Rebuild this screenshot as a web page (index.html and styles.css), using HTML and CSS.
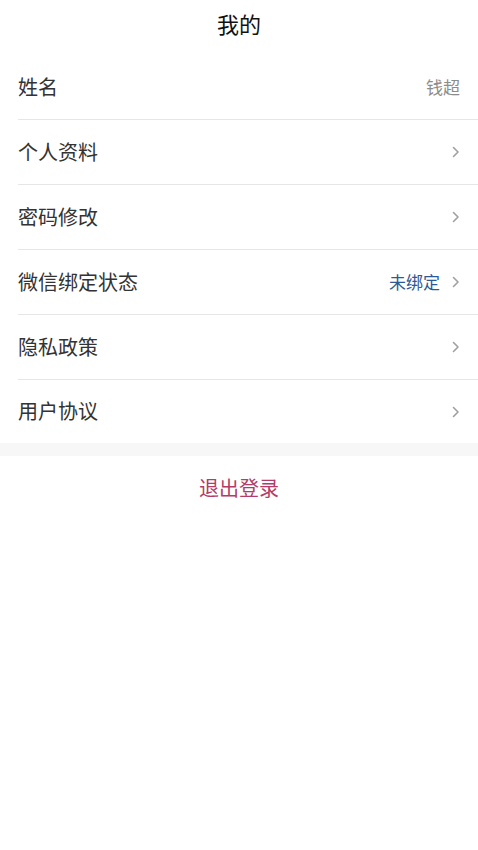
FILE: index.html
```html
<!DOCTYPE html>
<html lang="zh">
<head>
<meta charset="utf-8">
<title>我的</title>
<link rel="stylesheet" href="styles.css">
</head>
<body>
<div class="page">
  <header class="title">我的</header>
  <ul class="list">
    <li class="row"><span class="label">姓名</span><span class="value">钱超</span></li>
    <li class="row"><span class="label">个人资料</span><span class="chev"><svg width="8" height="12" viewBox="0 0 8 12"><path d="M1.5 1.5 L6 6 L1.5 10.5" fill="none" stroke="#a0a0a0" stroke-width="1.6" stroke-linecap="round" stroke-linejoin="round"/></svg></span></li>
    <li class="row"><span class="label">密码修改</span><span class="chev"><svg width="8" height="12" viewBox="0 0 8 12"><path d="M1.5 1.5 L6 6 L1.5 10.5" fill="none" stroke="#a0a0a0" stroke-width="1.6" stroke-linecap="round" stroke-linejoin="round"/></svg></span></li>
    <li class="row"><span class="label">微信绑定状态</span><span class="status">未绑定</span><span class="chev"><svg width="8" height="12" viewBox="0 0 8 12"><path d="M1.5 1.5 L6 6 L1.5 10.5" fill="none" stroke="#a0a0a0" stroke-width="1.6" stroke-linecap="round" stroke-linejoin="round"/></svg></span></li>
    <li class="row"><span class="label">隐私政策</span><span class="chev"><svg width="8" height="12" viewBox="0 0 8 12"><path d="M1.5 1.5 L6 6 L1.5 10.5" fill="none" stroke="#a0a0a0" stroke-width="1.6" stroke-linecap="round" stroke-linejoin="round"/></svg></span></li>
    <li class="row last"><span class="label">用户协议</span><span class="chev"><svg width="8" height="12" viewBox="0 0 8 12"><path d="M1.5 1.5 L6 6 L1.5 10.5" fill="none" stroke="#a0a0a0" stroke-width="1.6" stroke-linecap="round" stroke-linejoin="round"/></svg></span></li>
  </ul>
  <div class="band"></div>
  <div class="logout">退出登录</div>
</div>
</body>
</html>
```
FILE: styles.css
```css
html, body {
  margin: 0;
  padding: 0;
  background: #ffffff;
  font-family: "Noto Sans CJK SC", "Noto Sans", sans-serif;
}
.page {
  width: 478px;
}
.title {
  height: 45px;
  display: flex;
  align-items: center;
  justify-content: center;
  font-size: 22px;
  font-weight: 400;
  color: #111;
  padding-bottom: 10px;
}
.list {
  list-style: none;
  margin: 0;
  padding: 0 0 0 18px;
}
.row {
  height: 64px;
  border-bottom: 1px solid #e6e6e6;
  display: flex;
  align-items: center;
  padding-right: 18px;
}
.row.last {
  border-bottom: none;
  height: 63px;
}
.label {
  flex: 1;
  font-size: 20px;
  color: #333;
  margin-top: -2px;
}
.value {
  font-size: 17px;
  color: #8c8c8c;
  margin-top: -2px;
}
.status {
  font-size: 17px;
  color: #2b5a96;
  margin-right: 12px;
  margin-top: -2px;
}
.chev {
  display: flex;
  align-items: center;
  width: 8px;
  height: 12px;
}
.band {
  height: 13px;
  background: #f7f7f7;
}
.logout {
  height: 62px;
  display: flex;
  align-items: center;
  justify-content: center;
  font-size: 20px;
  color: #b33d68;
}
```
